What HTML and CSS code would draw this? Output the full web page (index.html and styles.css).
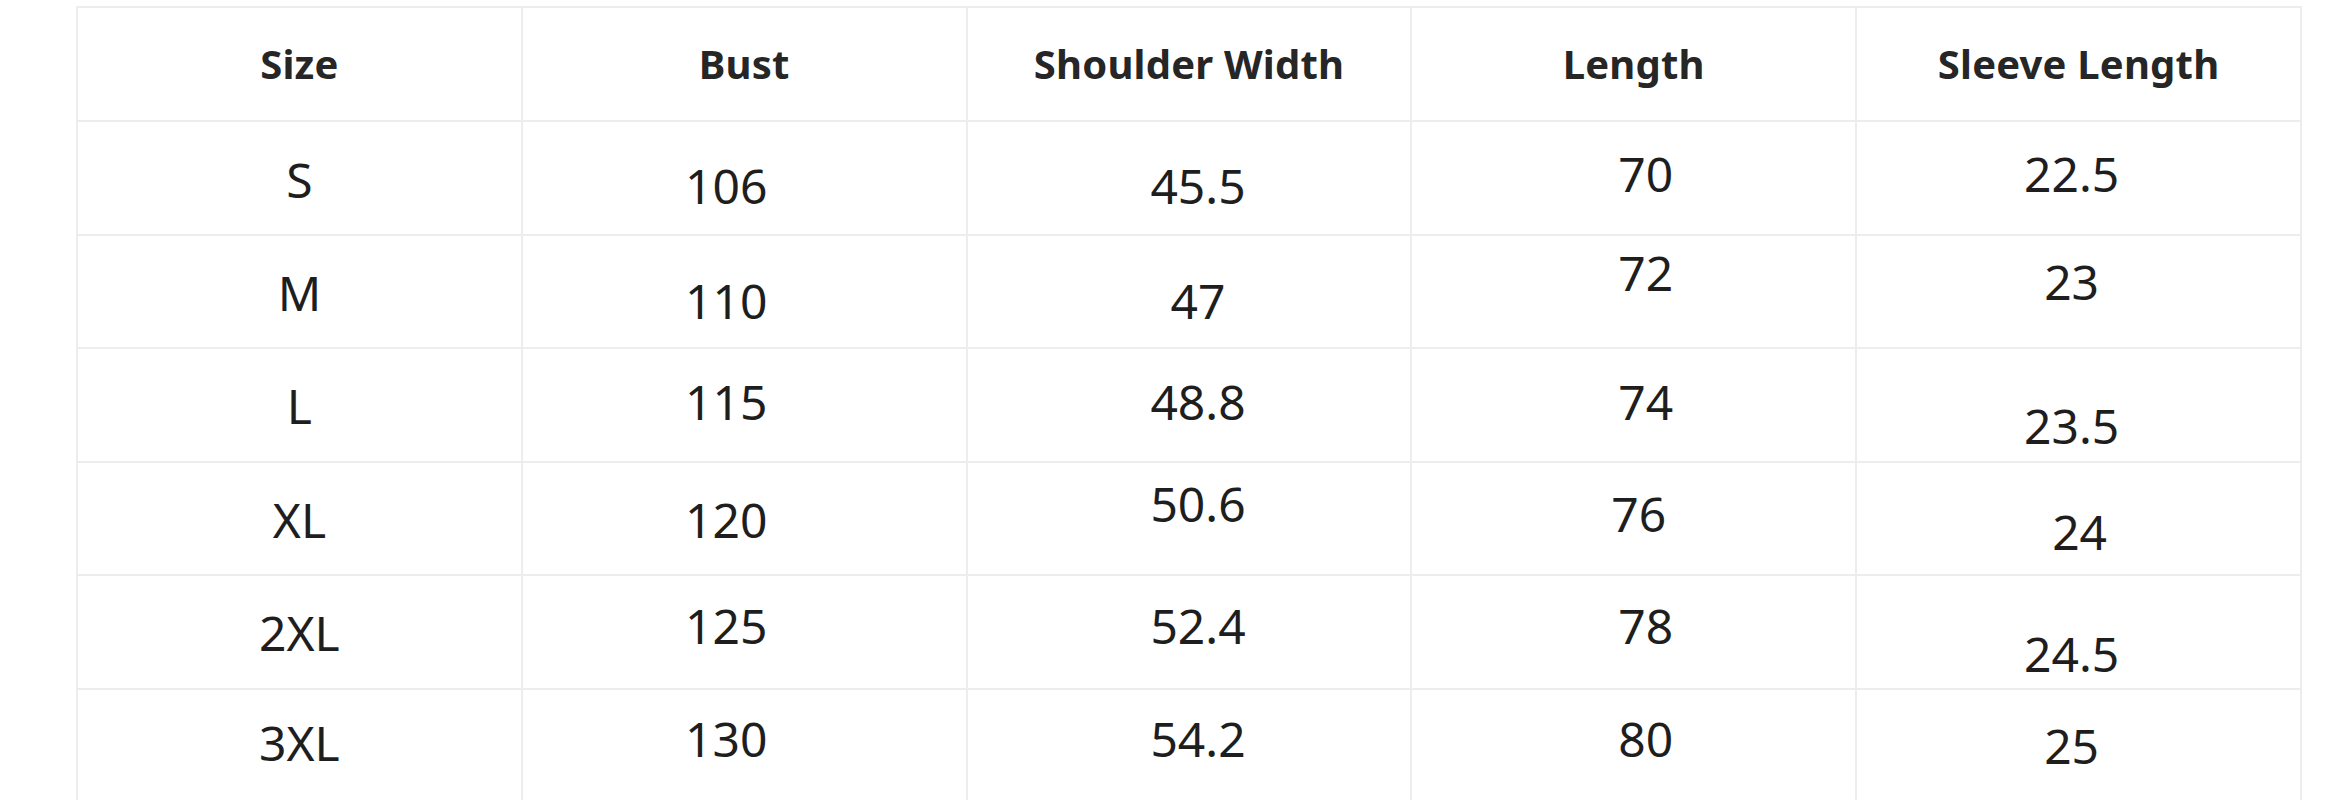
FILE: index.html
```html
<!DOCTYPE html>
<html lang="en">
<head>
<meta charset="utf-8">
<title>Size Chart</title>
<link rel="stylesheet" href="styles.css">
</head>
<body>
<div class="chart">
  <div class="cell head">Size</div>
  <div class="cell head">Bust</div>
  <div class="cell head">Shoulder Width</div>
  <div class="cell head">Length</div>
  <div class="cell head">Sleeve Length</div>

  <div class="cell dn2">S</div>
  <div class="cell c-bust dn8">106</div>
  <div class="cell c-sh dn8">45.5</div>
  <div class="cell c-len up4">70</div>
  <div class="cell c-sl up4">22.5</div>

  <div class="cell dn2">M</div>
  <div class="cell c-bust dn10">110</div>
  <div class="cell c-sh dn10">47</div>
  <div class="cell c-len up18">72</div>
  <div class="cell c-sl up9">23</div>

  <div class="cell dn1">L</div>
  <div class="cell c-bust up3">115</div>
  <div class="cell c-sh up3">48.8</div>
  <div class="cell c-len up3">74</div>
  <div class="cell c-sl dn21">23.5</div>

  <div class="cell dn2">XL</div>
  <div class="cell c-bust dn2">120</div>
  <div class="cell c-sh up14">50.6</div>
  <div class="cell c-len-b up4">76</div>
  <div class="cell c-sl-b dn14">24</div>

  <div class="cell dn1">2XL</div>
  <div class="cell c-bust up6">125</div>
  <div class="cell c-sh up6">52.4</div>
  <div class="cell c-len up6">78</div>
  <div class="cell c-sl dn22">24.5</div>

  <div class="cell up2">3XL</div>
  <div class="cell c-bust up6">130</div>
  <div class="cell c-sh up6">54.2</div>
  <div class="cell c-len up6">80</div>
  <div class="cell c-sl dn1">25</div>
</div>
</body>
</html>
```
FILE: styles.css
```css
html, body {
  margin: 0;
  padding: 0;
  background: #ffffff;
}

body {
  width: 2337px;
  height: 800px;
  overflow: hidden;
  font-family: "Noto Sans", "Open Sans", sans-serif;
  color: #222222;
}

.chart {
  margin: 6px 0 0 76px;
  width: 2226px;
  display: grid;
  grid-template-columns: repeat(5, 1fr);
  grid-template-rows: 114px;
  grid-auto-rows: 113.5px;
  border-top: 2px solid #ededed;
  border-left: 2px solid #ededed;
  box-sizing: border-box;
}

.cell {
  display: flex;
  align-items: center;
  justify-content: center;
  border-right: 2px solid #ededed;
  border-bottom: 2px solid #ededed;
  font-size: 48px;
  line-height: 1;
  font-weight: 400;
  color: #1e1e1e;
  box-sizing: border-box;
}

.head {
  font-size: 40px;
  font-weight: 700;
  color: #262626;
  letter-spacing: 0.2px;
}

/* column horizontal drift of the data figures */
.c-bust { padding-right: 36px; }
.c-sh { padding-left: 18px; }
.c-len { padding-left: 24px; }
.c-len-b { padding-left: 10px; }
.c-sl { padding-right: 14px; }
.c-sl-b { padding-left: 2px; }

/* vertical drift of individual figures */
.dn1 { padding-top: 2px; }
.dn2 { padding-top: 4px; }
.dn8 { padding-top: 16px; }
.dn10 { padding-top: 20px; }
.dn14 { padding-top: 28px; }
.dn21 { padding-top: 42px; }
.dn22 { padding-top: 44px; }
.up2 { padding-bottom: 4px; }
.up3 { padding-bottom: 6px; }
.up4 { padding-bottom: 8px; }
.up6 { padding-bottom: 12px; }
.up9 { padding-bottom: 18px; }
.up14 { padding-bottom: 28px; }
.up18 { padding-bottom: 36px; }
```
